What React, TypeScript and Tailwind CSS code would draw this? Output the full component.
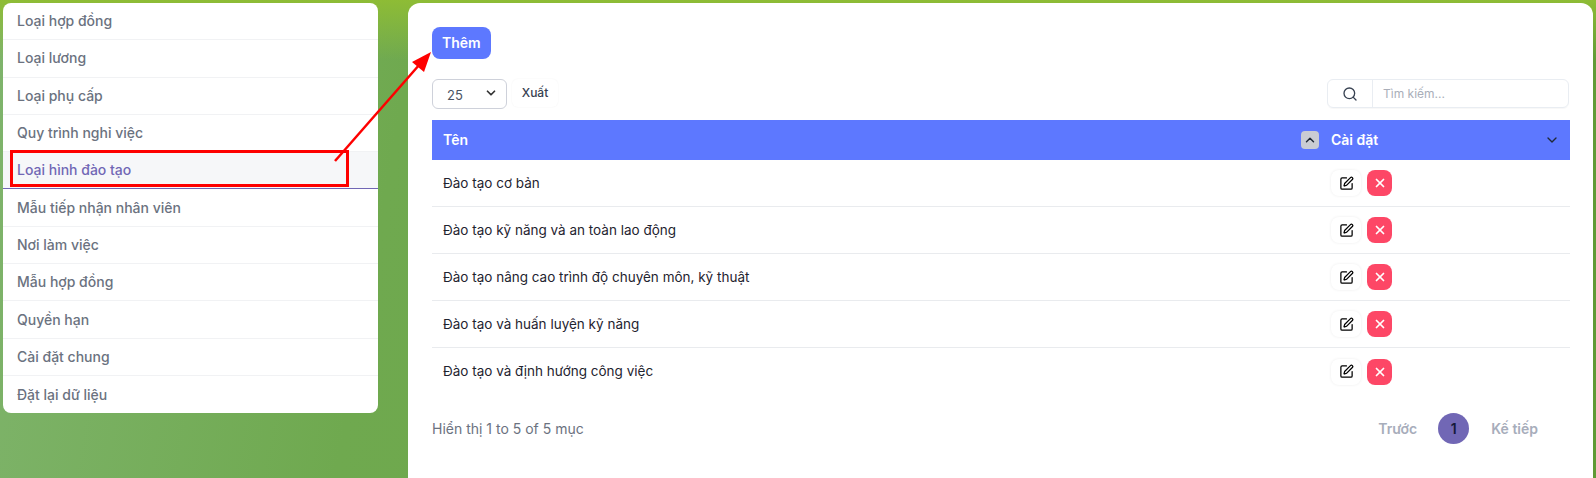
import { ChevronDown, ChevronUp, Search, SquarePen, X } from "lucide-react";

const menuItems = [
  "Loại hợp đồng",
  "Loại lương",
  "Loại phụ cấp",
  "Quy trình nghỉ việc",
  "Loại hình đào tạo",
  "Mẫu tiếp nhận nhân viên",
  "Nơi làm việc",
  "Mẫu hợp đồng",
  "Quyền hạn",
  "Cài đặt chung",
  "Đặt lại dữ liệu",
];

const rows = [
  "Đào tạo cơ bản",
  "Đào tạo kỹ năng và an toàn lao động",
  "Đào tạo nâng cao trình độ chuyên môn, kỹ thuật",
  "Đào tạo và huấn luyện kỹ năng",
  "Đào tạo và định hướng công việc",
];

export default function App() {
  return (
    <div className="relative h-[478px] w-[1596px] overflow-hidden bg-[linear-gradient(100deg,#7fb46c_0%,#6fa94f_25%,#6ea544_60%,#5f9a35_100%)] font-['Inter','Liberation_Sans',sans-serif]">
      <div className="absolute inset-x-0 top-0 h-[60px] bg-gradient-to-b from-[#8ebc35] to-transparent" />
      <div className="relative flex items-start gap-[30px] pl-[3px] pt-[3px]">
        <ul className="w-[375px] overflow-hidden rounded-lg bg-white text-sm font-medium text-[#6b7280]">
          {menuItems.map((item, i) => (
            <li
              key={item}
              className={
                i === 4
                  ? "flex h-[37.3px] items-center border-b border-[#7167b5] bg-[#f6f7f9] pl-[14px] text-[#7167b5]"
                  : "flex h-[37.3px] items-center border-b border-[#f1f2f4] pl-[14px] last:border-b-0"
              }
            >
              {item}
            </li>
          ))}
        </ul>

        <div className="h-[490px] w-[1185px] rounded-xl bg-white px-6 pt-6">
          <button className="h-8 rounded-lg bg-[#5d78ff] px-[10px] text-sm font-semibold text-white">
            Thêm
          </button>

          <div className="mt-5 flex items-start justify-between">
            <div className="flex items-start gap-[5px]">
              <div className="flex h-[30px] w-[75px] items-center justify-between rounded-md border border-[#ced1da] pl-[14px] pr-2 pt-[3px] text-[13px] text-[#4b5563]">
                25
                <ChevronDown className="-mt-[5px] size-[14px] text-[#333]" strokeWidth={3} />
              </div>
              <button className="h-7 w-[46px] rounded-md text-xs font-medium text-[#374151] shadow-[0_0_2px_rgba(0,0,0,0.06)]">
                Xuất
              </button>
            </div>
            <div className="flex h-[29px] w-[242px] items-center rounded-md border border-[#e9edf2] shadow-[0_1px_1px_rgba(0,0,0,0.03)]">
              <div className="flex h-full w-[45px] items-center justify-center border-r border-[#e9edf2]">
                <Search className="size-4 text-[#374151]" strokeWidth={2} />
              </div>
              <span className="pl-[10px] text-xs text-[#a9aeb9]">Tìm kiếm...</span>
            </div>
          </div>

          <div className="mt-[11px] w-[1138px]">
            <div className="flex h-10 items-center bg-[#5d78ff] text-sm font-semibold text-white">
              <div className="flex flex-1 items-center justify-between pl-[11px] pr-[11px]">
                Tên
                <span className="flex h-[18px] w-[18px] items-center justify-center rounded bg-[#c9ccd3]">
                  <ChevronUp className="size-[14px] text-[#1f2937]" strokeWidth={2.5} />
                </span>
              </div>
              <div className="flex w-[240px] items-center justify-between pl-[1px] pr-[10px]">
                Cài đặt
                <ChevronDown className="size-4 text-[#1f2937]" strokeWidth={2} />
              </div>
            </div>
            {rows.map((row) => (
              <div
                key={row}
                className="flex h-[47px] items-center border-b border-[#e9ebee] text-[13.5px] text-[#1f2430] last:border-b-0"
              >
                <div className="flex-1 pl-[11px]">{row}</div>
                <div className="flex w-[240px] items-center gap-[6px] pl-[1px]">
                  <span className="flex h-[26px] w-[30px] items-center justify-center rounded-lg bg-white shadow-[0_0_3px_rgba(0,0,0,0.08)]">
                    <SquarePen className="size-[15px] text-black" strokeWidth={2} />
                  </span>
                  <span className="flex h-[26px] w-[25px] items-center justify-center rounded-lg bg-[#fd4766]">
                    <X className="size-[14px] text-white" strokeWidth={3} />
                  </span>
                </div>
              </div>
            ))}
          </div>

          <div className="mt-[18px] flex w-[1138px] items-center justify-between">
            <span className="text-sm text-[#6b7280]">Hiển thị 1 to 5 of 5 mục</span>
            <div className="flex items-center text-sm font-semibold text-[#a7adbb]">
              <span>Trước</span>
              <span className="ml-[21px] flex size-[31px] items-center justify-center rounded-full bg-[#7167b5] text-[#15193a]">
                1
              </span>
              <span className="ml-[22px] mr-8">Kế tiếp</span>
            </div>
          </div>
        </div>
      </div>

      {/* red annotation over the screenshot */}
      <div className="absolute left-[10px] top-[150px] h-[37px] w-[339px] border-[3px] border-[#fe0000]" />
      <svg className="absolute left-0 top-0" width="1596" height="478" fill="none">
        <line x1="335" y1="161" x2="420" y2="64" stroke="#fe0000" strokeWidth="2.5" />
        <polygon points="431,52 424,72 412,62" fill="#fe0000" />
      </svg>
    </div>
  );
}
